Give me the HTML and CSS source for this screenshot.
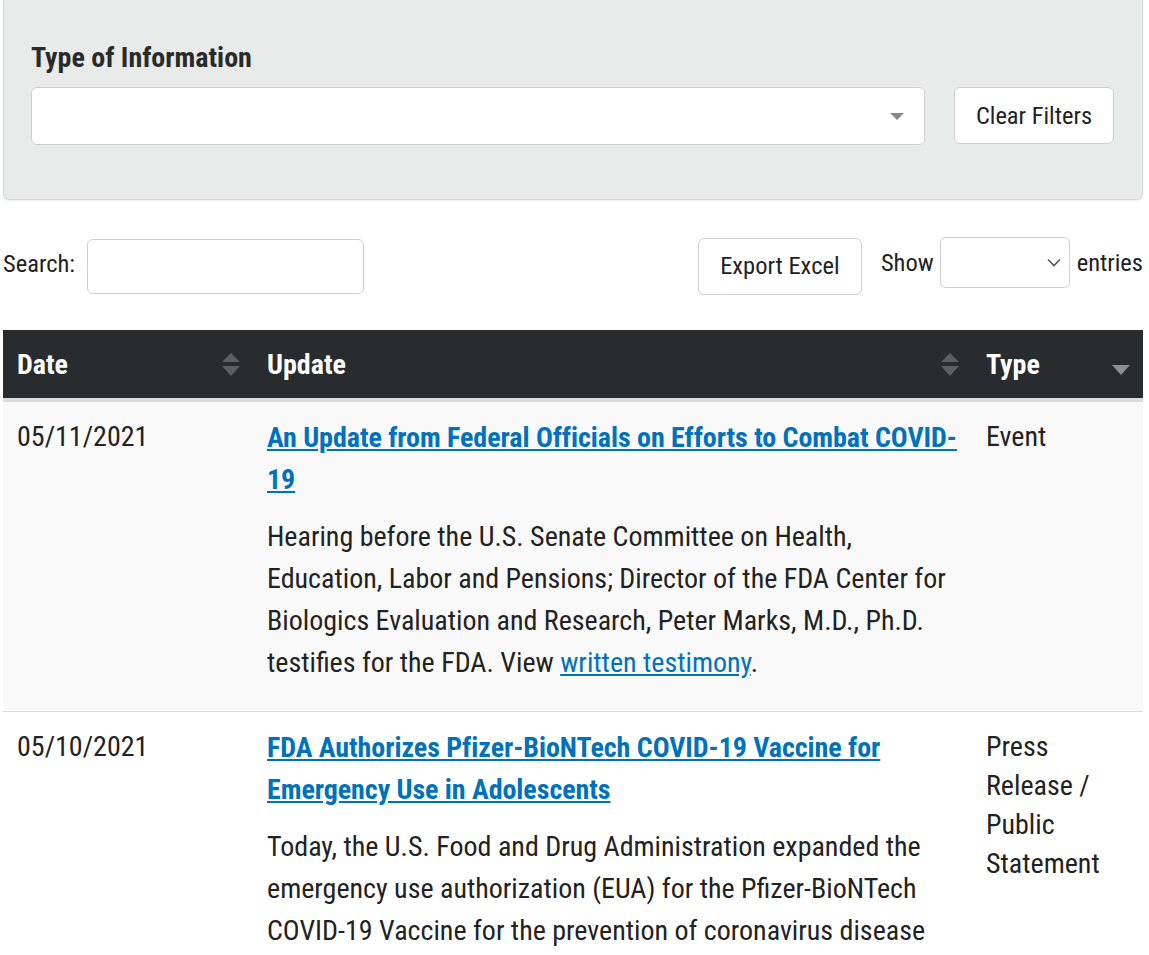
FILE: index.html
```html
<!DOCTYPE html>
<html>
<head>
    <title>COVID-19 Updates</title>
    <meta name="viewport" content="width=device-width, initial-scale=1.0">
    <link rel="stylesheet" href="styles.css">
</head>
<body>
<div class="page">
    <div class="filters">
        <div class="filter-field">
            <label class="filter-label">Type of Information</label>
            <div class="fake-select"><span class="caret"></span></div>
        </div>
        <button class="btn btn-clear">Clear Filters</button>
    </div>

    <div class="table-tools">
        <label class="search"><span class="search-text">Search:</span> <input type="text" class="search-input"></label>
        <div class="tools-right">
            <button class="btn btn-export">Export Excel</button>
            <label class="length">Show
                <span class="length-select">
                    <svg width="14" height="9" viewBox="0 0 14 9"><path d="M1 1.5 L7 7.5 L13 1.5" fill="none" stroke="#555" stroke-width="1.6"/></svg>
                </span>
                entries</label>
        </div>
    </div>

    <table class="updates">
        <colgroup>
            <col class="col-date">
            <col class="col-update">
            <col class="col-type">
        </colgroup>
        <thead>
            <tr>
                <th><div class="th-inner">Date
                    <svg class="sort" width="18" height="24" viewBox="0 0 18 24"><path d="M9 0 L18 9 L0 9 Z M0 13 L18 13 L9 23 Z" fill="#5c6062"/></svg></div></th>
                <th><div class="th-inner">Update
                    <svg class="sort" width="18" height="24" viewBox="0 0 18 24"><path d="M9 0 L18 9 L0 9 Z M0 13 L18 13 L9 23 Z" fill="#5c6062"/></svg></div></th>
                <th><div class="th-inner">Type
                    <svg class="sort sort-desc" width="18" height="11" viewBox="0 0 18 11"><path d="M0 0 L18 0 L9 10 Z" fill="#8c8e8f"/></svg></div></th>
            </tr>
        </thead>
        <tbody>
            <tr class="odd">
                <td>05/11/2021</td>
                <td>
                    <a class="title" href="#">An Update from Federal Officials on Efforts to Combat COVID-19</a>
                    <p>Hearing before the U.S. Senate Committee on Health, Education, Labor and Pensions; Director of the FDA Center for Biologics Evaluation and Research, Peter Marks, M.D., Ph.D. testifies for the FDA. View <a href="#">written testimony</a>.</p>
                </td>
                <td>Event</td>
            </tr>
            <tr>
                <td>05/10/2021</td>
                <td>
                    <a class="title" href="#">FDA Authorizes Pfizer-BioNTech COVID-19 Vaccine for Emergency Use in Adolescents</a>
                    <p>Today, the U.S. Food and Drug Administration expanded the emergency use authorization (EUA) for the Pfizer-BioNTech COVID-19 Vaccine for the prevention of coronavirus disease 2019 (COVID-19) to include adolescents 12 through 15 years of age.</p>
                </td>
                <td>Press Release / Public Statement</td>
            </tr>
        </tbody>
    </table>
</div>
</body>
</html>
```

FILE: styles.css
```css
html, body {
    margin: 0;
    background-color: #fff;
    font-family: "Roboto Condensed", "Liberation Sans Narrow", "DejaVu Sans Condensed", Roboto, sans-serif;
    font-size: 28px;
    color: #222;
}
.page {
    padding: 0 6px 0 3px;
}
.filters {
    display: flex;
    align-items: flex-end;
    gap: 29px;
    padding: 42px 28px 54px 27px;
    background-color: #e9eaea;
    border: 1px solid #d8d8d8;
    border-top: none;
    border-radius: 0 0 6px 6px;
    box-shadow: 0 1px 2px rgba(0, 0, 0, 0.06);
}
.filter-field {
    flex: 1;
}
.filter-label {
    display: block;
    font-weight: bold;
    line-height: 31px;
    margin-bottom: 14px;
    color: #2a2a2a;
}
.fake-select {
    height: 56px;
    background-color: #fff;
    border: 1px solid #cfcfcf;
    border-radius: 6px;
    position: relative;
}
.caret {
    position: absolute;
    right: 20px;
    top: 25px;
    border-left: 7px solid transparent;
    border-right: 7px solid transparent;
    border-top: 7px solid #888;
}
.btn {
    font-family: inherit;
    font-size: 24.5px;
    color: #222;
    background-color: #fff;
    border: 1px solid #cfcfcf;
    border-radius: 6px;
    height: 57px;
    padding: 0;
    cursor: pointer;
}
.btn-clear {
    width: 160px;
    margin-bottom: 1px;
}
.table-tools {
    display: flex;
    justify-content: space-between;
    align-items: center;
    margin-top: 38px;
    height: 57px;
    font-size: 24.5px;
}
.search {
    display: flex;
    align-items: center;
    gap: 12px;
}
.search-text {
    margin-bottom: 6px;
}
.search-input {
    width: 277px;
    height: 55px;
    box-sizing: border-box;
    border: 1px solid #cfcfcf;
    border-radius: 6px;
}
.tools-right {
    display: flex;
    align-items: flex-start;
    height: 57px;
}
.btn-export {
    width: 164px;
    margin-right: 19px;
    padding-bottom: 2px;
}
.length {
    display: flex;
    align-items: center;
    gap: 6px;
    height: 51px;
    padding-bottom: 2px;
    box-sizing: border-box;
}
.length-select {
    display: flex;
    align-items: center;
    justify-content: flex-end;
    width: 130px;
    height: 51px;
    box-sizing: border-box;
    padding-right: 8px;
    border: 1px solid #cfcfcf;
    border-radius: 6px;
    margin-right: 1px;
}
.updates {
    width: 100%;
    margin-top: 35px;
    border-collapse: collapse;
    table-layout: fixed;
}
.col-date { width: 250px; }
.col-update { width: 719px; }
.col-type { width: 171px; }
.updates th {
    background-color: #282c2e;
    color: #fff;
    font-weight: bold;
    text-align: left;
    height: 68px;
    padding: 0 13px 0 14px;
    border-bottom: 4px solid #dcdcdc;
}
.th-inner {
    display: flex;
    justify-content: space-between;
    align-items: center;
}
.sort {
    margin-top: 2px;
}
.sort-desc {
    margin-top: 12px;
}
.updates td {
    vertical-align: top;
    padding: 15px 14px 27px 14px;
    line-height: 39px;
    border-bottom: 1px solid #dddddd;
}
.updates tr.odd td {
    background-color: #f9f9f9;
}
.updates a {
    color: #0071bc;
}
.title {
    display: block;
    font-weight: bold;
    line-height: 42px;
    margin-bottom: 15px;
    letter-spacing: -0.05px;
}
.updates p {
    margin: 0;
    line-height: 42px;
}
```
